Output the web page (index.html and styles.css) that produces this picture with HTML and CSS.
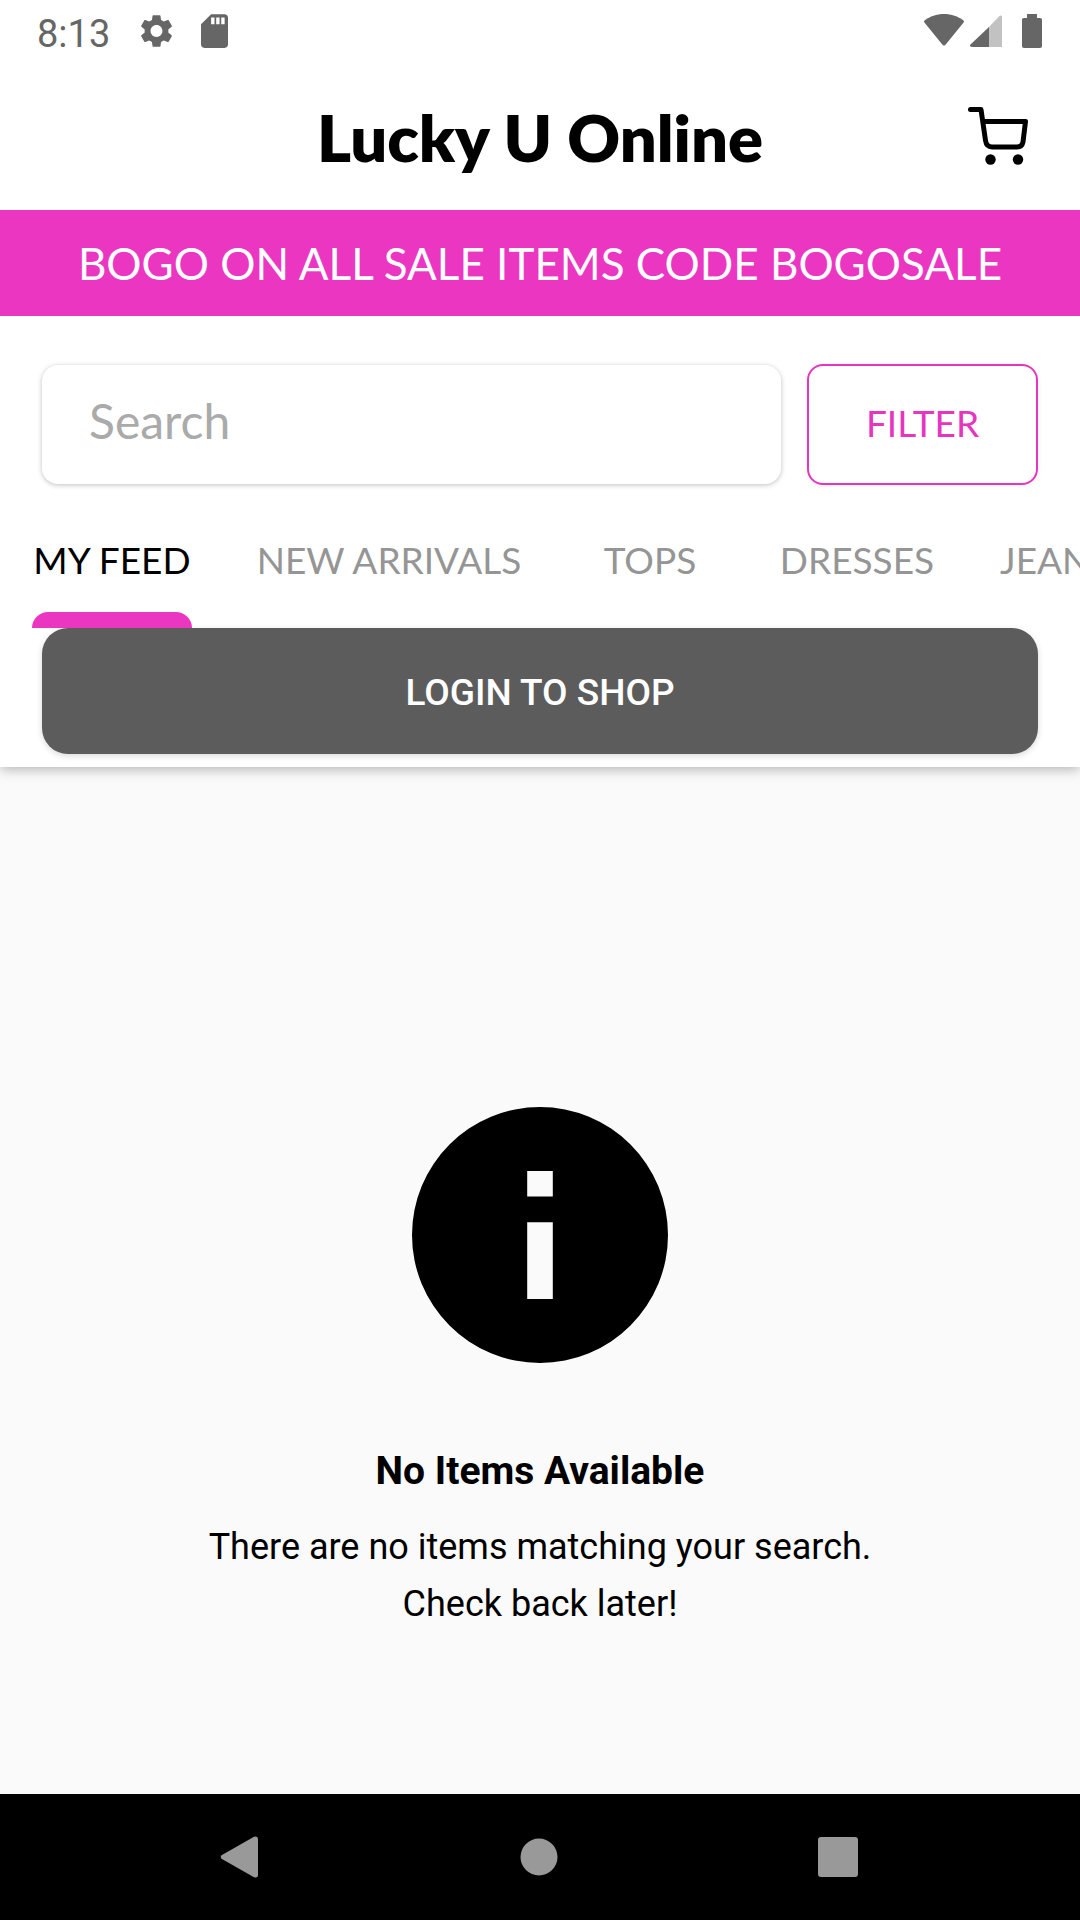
FILE: index.html
```html
<!DOCTYPE html>
<html lang="en">
<head>
<meta charset="utf-8">
<meta name="viewport" content="width=device-width, initial-scale=1">
<title>Lucky U Online</title>
<link rel="stylesheet" href="styles.css">
</head>
<body>
<div class="status-bar">
  <div class="status-left">
    <span class="clock">8:13</span>
    <svg class="status-gear" viewBox="2 2 20 20" aria-hidden="true"><path d="M19.14 12.94c.04-.3.06-.61.06-.94 0-.32-.02-.64-.07-.94l2.03-1.58c.18-.14.23-.41.12-.61l-1.92-3.32c-.12-.22-.37-.29-.59-.22l-2.39.96c-.5-.38-1.03-.7-1.62-.94l-.36-2.54c-.04-.24-.24-.41-.48-.41h-3.84c-.24 0-.43.17-.47.41l-.36 2.54c-.59.24-1.13.57-1.62.94l-2.39-.96c-.22-.08-.47 0-.59.22L2.74 8.87c-.12.21-.08.47.12.61l2.03 1.58c-.05.3-.09.63-.09.94s.02.64.07.94l-2.03 1.58c-.18.14-.23.41-.12.61l1.92 3.32c.12.22.37.29.59.22l2.39-.96c.5.38 1.03.7 1.62.94l.36 2.54c.05.24.24.41.48.41h3.84c.24 0 .44-.17.47-.41l.36-2.54c.59-.24 1.13-.56 1.62-.94l2.39.96c.22.08.47 0 .59-.22l1.92-3.32c.12-.22.07-.47-.12-.61l-2.01-1.58zM12 15.6c-1.98 0-3.6-1.62-3.6-3.6s1.62-3.6 3.6-3.6 3.6 1.62 3.6 3.6-1.62 3.6-3.6 3.6z"/></svg>
    <svg class="status-card" viewBox="4 2 16 20" aria-hidden="true"><path d="M18 2h-8L4.020 8 4 20c0 1.100.900 2 2 2h12c1.100 0 2-.900 2-2V4c0-1.100-.900-2-2-2zm-6 6h-2V4h2v4zm3 0h-2V4h2v4zm3 0h-2V4h2v4z"/></svg>
  </div>
  <div class="status-right">
    <svg class="status-wifi" viewBox="0 0 40 32" aria-hidden="true"><path d="M20 0C12.500 0 6 2.400.800 6.200c-.900.700-1 1.600-.400 2.400L18.500 30.800c.900 1.100 2.100 1.100 3 0L39.600 8.600c.600-.800.500-1.700-.400-2.400C34 2.400 27.500 0 20 0z"/></svg>
    <svg class="status-signal" viewBox="0 0 32 32" aria-hidden="true"><path fill="#c2c2c2" d="M18 13 29.500 1C30.500 0 32 .500 32 2v30H18z"/><path d="M19 12v20H2c-2 0-2.500-1.500-1.500-2.600z"/></svg>
    <svg class="status-battery" viewBox="0 0 20 34" aria-hidden="true"><path d="M5 0h10v4h3c1.300 0 2 .700 2 2v26c0 1.300-.700 2-2 2H2c-1.300 0-2-.700-2-2V6c0-1.300.700-2 2-2h3z"/></svg>
  </div>
</div>

<header class="app-header">
  <div class="title-bar">
    <h1 class="title">Lucky U Online</h1>
    <button class="cart-button" type="button" aria-label="Cart">
      <svg class="cart-icon" viewBox="0 0 60 60" aria-hidden="true"><path fill="none" stroke="#000" stroke-width="5" stroke-linecap="round" stroke-linejoin="round" d="M2.500 2.500H13L17.500 33.500Q18.500 40 24 40H49Q54 40 55 35L57.500 14.500H15"/><circle cx="22.500" cy="52.500" r="5.200"/><circle cx="50" cy="52.500" r="5.200"/></svg>
    </button>
  </div>
  <p class="banner">BOGO ON ALL SALE ITEMS CODE BOGOSALE</p>
  <form class="search-row">
    <input class="search-input" type="search" placeholder="Search" aria-label="Search">
    <button class="filter-button" type="button">FILTER</button>
  </form>
  <nav class="tabs" aria-label="Categories">
    <a class="tab tab-active" href="#feed" aria-current="page">MY FEED</a>
    <a class="tab tab-wide" href="#new">NEW ARRIVALS</a>
    <a class="tab tab-short" href="#tops">TOPS</a>
    <a class="tab tab-medium" href="#dresses">DRESSES</a>
    <a class="tab" href="#jeans">JEANS</a>
  </nav>
  <button class="login-button" type="button">LOGIN TO SHOP</button>
</header>

<main class="empty-state">
  <svg class="info-icon" viewBox="2 2 20 20" aria-hidden="true"><path d="M12 2a10 10 0 1 0 0 20 10 10 0 0 0 0-20zm1 15h-2v-6h2v6zm0-8h-2V7h2v2z"/></svg>
  <h2 class="empty-title">No Items Available</h2>
  <p class="empty-text">There are no items matching your search.<br>Check back later!</p>
</main>

<footer class="system-nav">
  <button class="nav-button" type="button" aria-label="Back"><svg class="nav-icon" viewBox="0 0 42 42" aria-hidden="true"><path d="M2.500 19.300 35 .800Q39 -.500 39 3V39Q39 42.500 35 41.200L2.500 22.700Q1 21 2.500 19.300z"/></svg></button>
  <button class="nav-button" type="button" aria-label="Home"><svg class="nav-icon" viewBox="0 0 42 42" aria-hidden="true"><circle cx="21" cy="21" r="18.500"/></svg></button>
  <button class="nav-button" type="button" aria-label="Recent apps"><svg class="nav-icon" viewBox="0 0 42 42" aria-hidden="true"><rect x="1" y="1" width="40" height="40" rx="3"/></svg></button>
</footer>
</body>
</html>
```
FILE: styles.css
```css
* {
  box-sizing: border-box;
}

body {
  margin: 0;
  min-height: 100vh;
  display: flex;
  flex-direction: column;
  background: #fafafa;
  color: #000;
  font-family: Roboto, sans-serif;
  overflow-x: hidden;
}

button {
  padding: 0;
  border: 0;
  background: none;
  font: inherit;
  cursor: pointer;
}

.status-bar {
  position: relative;
  z-index: 1;
  display: flex;
  justify-content: space-between;
  padding: 14px 38px 0 37px;
  height: 64px;
  background: #fff;
  fill: #666;
  color: #666;
}

.status-left,
.status-right {
  display: flex;
  align-items: flex-start;
}

.clock {
  width: 103px;
  font-size: 38px;
  line-height: 40px;
}

.status-gear {
  width: 33px;
  height: 34px;
  margin-right: 28px;
}

.status-card {
  width: 27px;
  height: 34px;
}

.status-wifi {
  width: 40px;
  height: 32px;
  margin-right: 6px;
}

.status-signal {
  width: 32px;
  height: 32px;
  margin: 1px 20px 0 0;
}

.status-battery {
  width: 20px;
  height: 34px;
}

.app-header {
  padding-bottom: 13px;
  background: #fff;
  box-shadow: 0 2px 12px rgba(0, 0, 0, 0.3);
  font-family: Lato, sans-serif;
}

.title-bar {
  display: grid;
  grid-template-columns: 60px 1fr 60px;
  align-items: center;
  height: 146px;
  padding: 0 52px;
}

.title {
  grid-column: 2;
  margin: 0;
  font-size: 65px;
  line-height: 76px;
  font-weight: 800;
  text-align: center;
  white-space: nowrap;
}

.cart-button,
.cart-icon {
  display: block;
  width: 60px;
  height: 60px;
}

.banner {
  margin: 0;
  padding: 27px 0;
  background: #eb36c2;
  color: #fff;
  font-size: 44px;
  line-height: 52px;
  text-align: center;
  white-space: nowrap;
}

.search-row {
  display: flex;
  gap: 26px;
  padding: 48px 42px 0;
}

.search-input {
  flex: 1;
  min-width: 0;
  height: 119px;
  margin-top: 1px;
  padding: 0 47px 8px;
  border: 0;
  border-radius: 16px;
  background: #fff;
  box-shadow: 0 1px 5px rgba(0, 0, 0, 0.25);
  font: 48px Lato, sans-serif;
  appearance: none;
}

.search-input::placeholder {
  color: #aaa;
}

.filter-button {
  width: 231px;
  height: 121px;
  padding-bottom: 4px;
  border: 2px solid #e536bd;
  border-radius: 16px;
  color: #e536bd;
  font-size: 37px;
  box-shadow: 0 1px 5px rgba(0, 0, 0, 0.08);
}

.tabs {
  display: flex;
  gap: 64px;
  padding: 53px 32px 0;
  overflow: hidden;
}

.tab {
  flex: none;
  color: #959595;
  font-size: 37px;
  line-height: 44px;
  text-align: center;
  text-decoration: none;
  white-space: nowrap;
}

.tab-short {
  min-width: 128px;
}

.tab-medium {
  min-width: 158px;
}

.tab-wide {
  min-width: 266px;
}

.tab-active {
  min-width: 160px;
  color: #000;
}

.tab-active::after {
  content: "";
  display: block;
  height: 16px;
  margin-top: 30px;
  border-radius: 16px 16px 0 0;
  background: #eb36c2;
}

.login-button {
  display: block;
  width: calc(100% - 84px);
  height: 126px;
  margin: 0 42px;
  padding-top: 2px;
  border-radius: 26px;
  background: #5c5c5c;
  box-shadow: 0 2px 6px rgba(0, 0, 0, 0.15);
  color: #fff;
  font: 500 37px Roboto, sans-serif;
}

.empty-state {
  flex: 1;
  display: flex;
  flex-direction: column;
  align-items: center;
  justify-content: center;
  text-align: center;
}

.info-icon {
  width: 256px;
  height: 256px;
  margin-top: 182px;
}

.empty-title {
  margin: 84px 0 24px;
  font-size: 39px;
  line-height: 48px;
  font-weight: 700;
}

.empty-text {
  margin: 0 0 4px;
  font-size: 36px;
  line-height: 57px;
}

.system-nav {
  display: flex;
  justify-content: center;
  gap: 257px;
  height: 126px;
  padding-right: 2px;
  background: #000;
  fill: #999;
}

.nav-button,
.nav-icon {
  display: block;
  width: 42px;
}

.nav-icon {
  height: 42px;
}
```
